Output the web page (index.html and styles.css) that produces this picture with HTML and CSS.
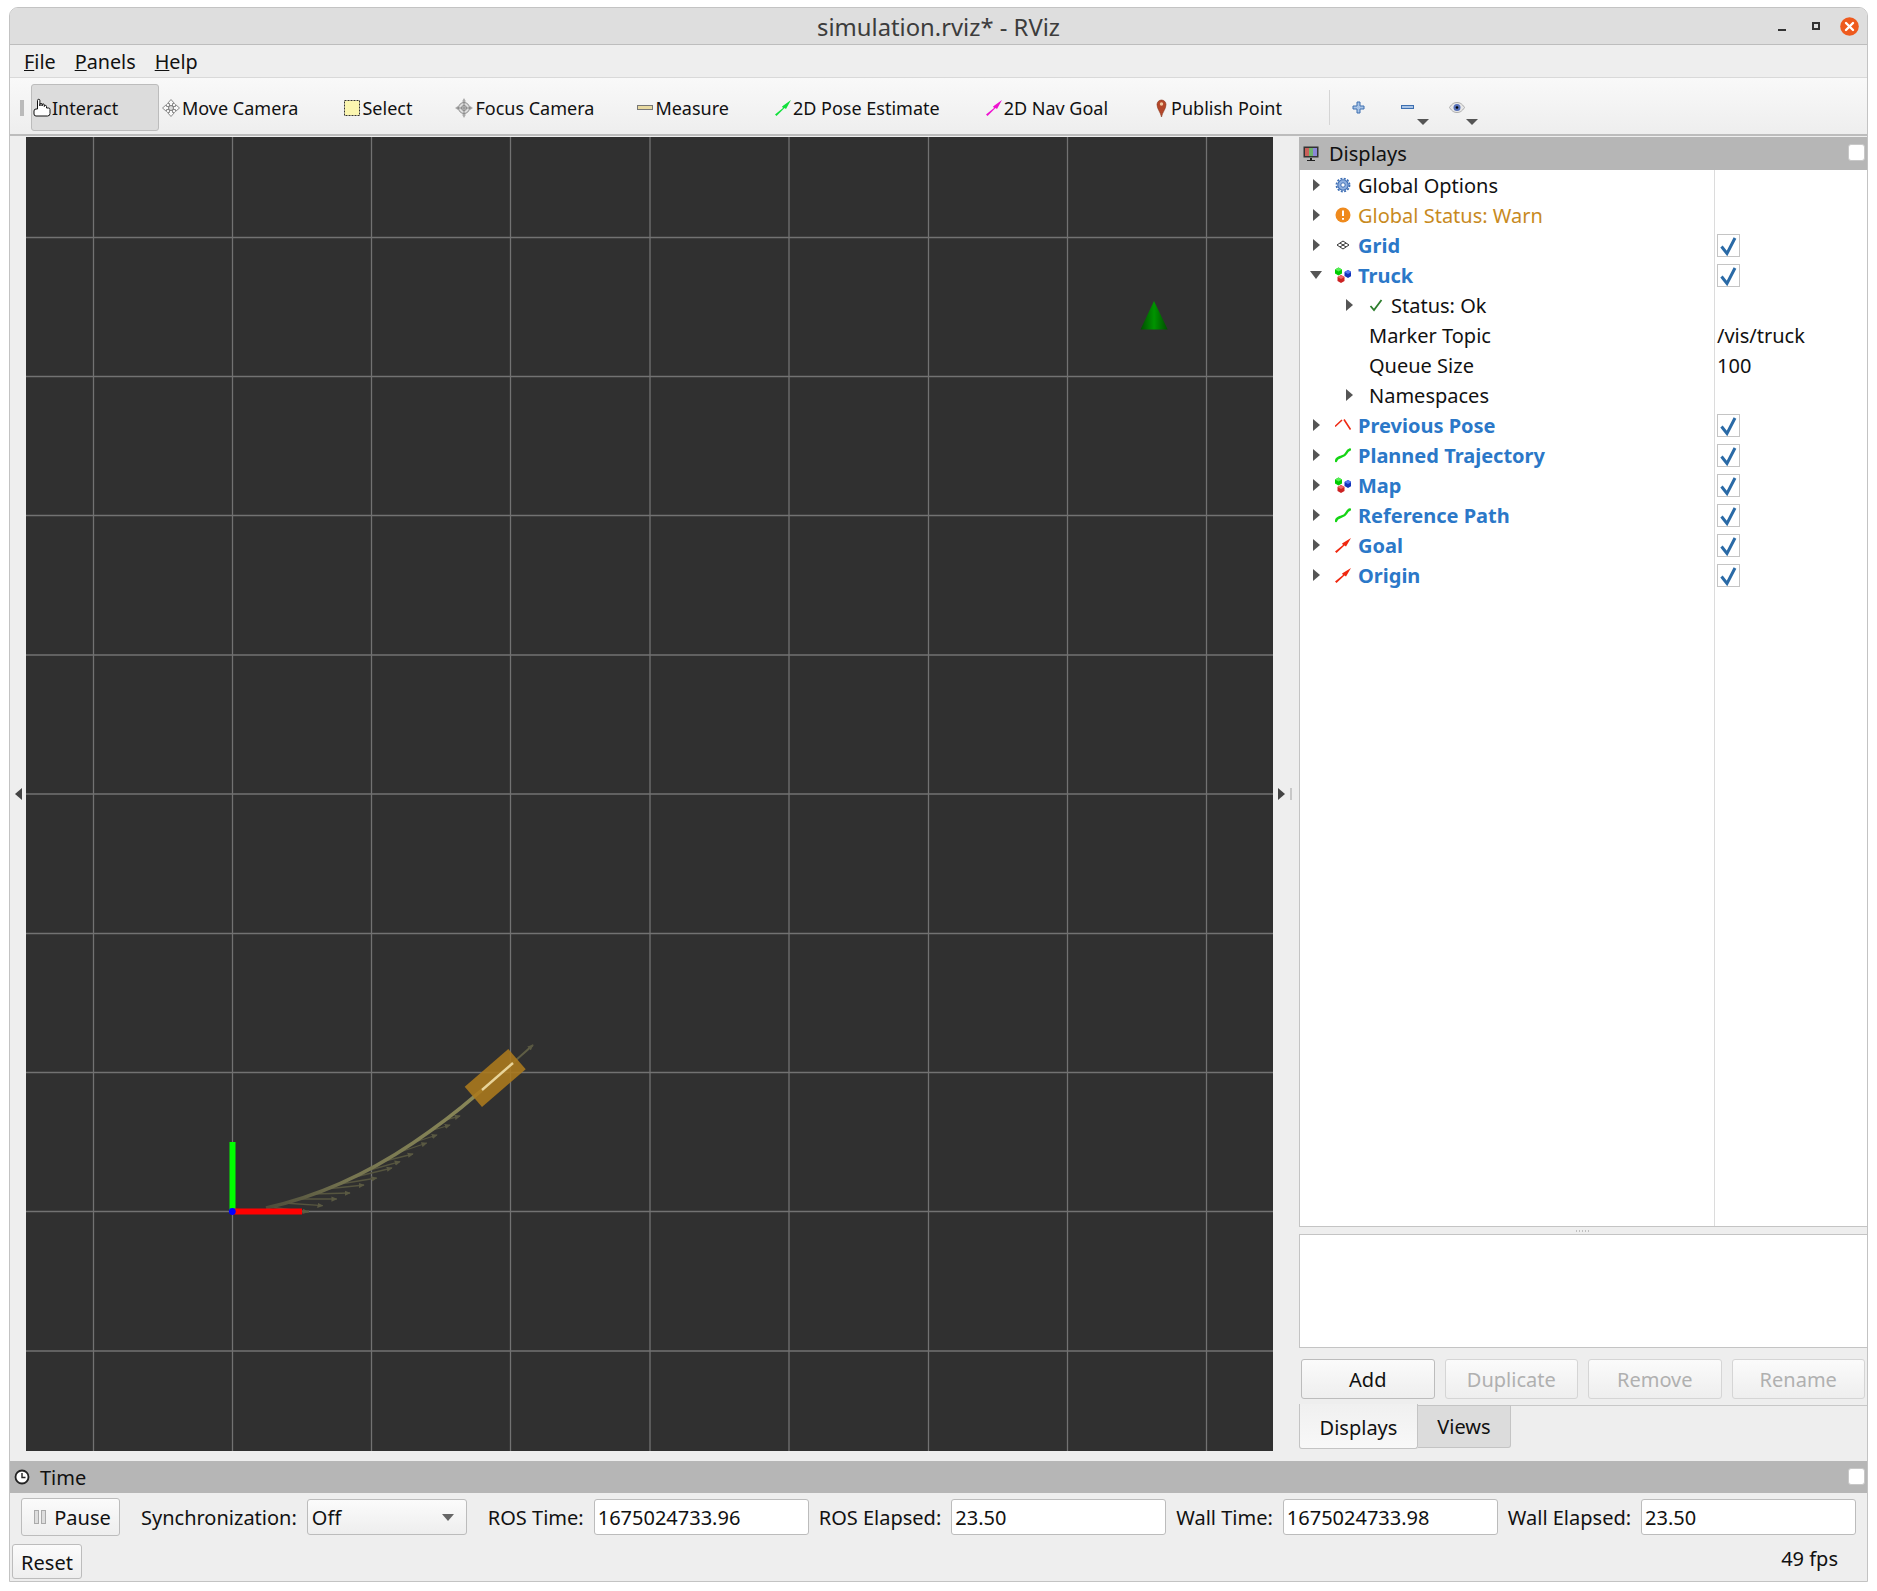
FILE: index.html
```html
<!DOCTYPE html>
<html lang="en">
<head>
<meta charset="utf-8">
<title>simulation.rviz* - RViz</title>
<link rel="stylesheet" href="styles.css">
</head>
<body>
<svg class="defs" width="0" height="0" aria-hidden="true">
  <defs>
    <symbol id="i-cubes" viewBox="0 0 16 16">
      <path d="M0 2.500 3.500.5 7 2.500V6.500L3.500 8.500 0 6.500z" fill="#0c0"/><path d="M0 2.500 3.500 4.500 7 2.500 3.500.5z" fill="#5e5"/>
      <path d="M2.500 10 6 8 9.500 10V14L6 16 2.500 14z" fill="#c22"/><path d="M2.500 10 6 12 9.500 10 6 8z" fill="#e66"/>
      <path d="M9.500 5 13 3 16.500 5V9L13 11 9.500 9z" fill="#13b"/><path d="M9.500 5 13 7 16.500 5 13 3z" fill="#57e"/>
    </symbol>
    <symbol id="i-path" viewBox="0 0 16 16">
      <path d="M1 14c.5-3 3-3.500 5-4.200s4-1.300 5-3.300 2-3.500 4-4" fill="none" stroke="#16d416" stroke-width="2.400" stroke-linecap="round"/>
    </symbol>
    <symbol id="i-arrow-red" viewBox="0 0 16 16">
      <path d="M0 14.500 8 8 7 6.500 16 1 11 9.500 9.500 8.500 1.500 16z" fill="#f0280f"/>
    </symbol>
    <symbol id="i-chev" viewBox="0 0 16 16">
      <path d="M0 9.500 7 3M9 2.500 15.500 12.500" fill="none" stroke="#ee2a14" stroke-width="1.600"/>
    </symbol>
    <symbol id="i-check" viewBox="0 0 23 23">
      <path d="M4.500 12.500 10 19.500 18 4" fill="none" stroke="#2a6aa6" stroke-width="3"/>
    </symbol>
  </defs>
</svg>
<div class="window">
  <header class="titlebar">
    <span></span>
    <span class="title">simulation.rviz* - RViz</span>
    <div class="wm">
      <span class="wm-min"></span>
      <span class="wm-max"></span>
      <svg class="wm-close" width="19" height="19" viewBox="0 0 19 19"><circle cx="9.500" cy="9.500" r="9.300" fill="#ee5a1e"/><path d="M6 6l7 7M13 6l-7 7" stroke="#fff" stroke-width="2.400" stroke-linecap="round"/></svg>
    </div>
  </header>
  <nav class="menubar">
    <span><u>F</u>ile</span>
    <span><u>P</u>anels</span>
    <span><u>H</u>elp</span>
  </nav>
  <div class="toolbar">
    <span class="grip"></span>
    <div class="tool tool-active">
      <svg width="18" height="19" viewBox="0 0 18 19"><path d="M4.500 11V2.500a1.200 1.200 0 0 1 2.400 0V8V6.500a1.100 1.100 0 0 1 2.200 0V8 7a1.100 1.100 0 0 1 2.200 0V8.500a1.100 1.100 0 0 1 2.200 0V10H15.500a1.500 1.500 0 0 1 1.500 1.500V15.500a2.500 2.500 0 0 1-2.500 2.500H3a2 2 0 0 1-2-2V13a2 2 0 0 1 2-2z" fill="#fff" stroke="#111" stroke-width="1"/></svg>
      <span>Interact</span>
    </div>
    <div class="tool tool-move">
      <svg width="18" height="18" viewBox="0 0 18 18"><path d="M9 .5 12.500 4.500H10.500V7.500H13.500V5.500L17.500 9 13.500 12.500V10.500H10.500V13.500H12.500L9 17.500 5.500 13.500H7.500V10.500H4.500V12.500L.5 9 4.500 5.500V7.500H7.500V4.500H5.500z" fill="#fafafa" stroke="#8a8a8a"/><circle cx="9" cy="9" r="2.500" fill="#ddd" stroke="#777"/></svg>
      <span>Move Camera</span>
    </div>
    <div class="tool tool-tight">
      <svg width="16" height="16" viewBox="0 0 16 16"><rect x="0.500" y="0.500" width="15" height="15" fill="#fbf6b0" stroke="#333" stroke-dasharray="2 1"/></svg>
      <span>Select</span>
    </div>
    <div class="tool tool-tight">
      <svg width="18" height="20" viewBox="0 0 18 20"><path d="M9 0 11 3.500H7zM9 20 7 16.500H11zM0 10 3 8V12zM18 10 15 12V8z" fill="#aaa"/><circle cx="9" cy="10" r="5.500" fill="#ddd" stroke="#8a8a8a"/><path d="M9 3v14M2 10h14" stroke="#888"/><circle cx="9" cy="10" r="2.500" fill="none" stroke="#888"/></svg>
      <span>Focus Camera</span>
    </div>
    <div class="tool">
      <svg width="16" height="16" viewBox="0 0 16 16"><rect x="0.500" y="5.500" width="15" height="4" fill="#e8d9a0" stroke="#777"/></svg>
      <span>Measure</span>
    </div>
    <div class="tool">
      <svg width="16" height="16" viewBox="0 0 16 16"><path d="M0 14.500 8 8 7 6.500 16 0 11 9 9.500 8 1.500 16z" fill="#12e03c"/></svg>
      <span>2D Pose Estimate</span>
    </div>
    <div class="tool tool-nav">
      <svg width="16" height="16" viewBox="0 0 16 16"><path d="M0 14.500 8 8 7 6.500 16 0 11 9 9.500 8 1.500 16z" fill="#ee12d0"/></svg>
      <span>2D Nav Goal</span>
    </div>
    <div class="tool tool-pub">
      <svg width="11" height="18" viewBox="0 0 11 18"><path d="M5.500 18C4.500 13 1 10 1 5.500a4.500 4.500 0 0 1 9 0C10 10 6.500 13 5.500 18z" fill="#b4472a" stroke="#8a3a20" stroke-width=".6"/><circle cx="5.500" cy="5" r="1.700" fill="#f0c8a0"/></svg>
      <span>Publish Point</span>
    </div>
    <span class="tool-sep"></span>
    <div class="tool-small tool-plus">
      <svg width="13" height="13" viewBox="0 0 13 13"><path d="M5 1h3v4h4v3H8v4H5V8H1V5h4z" fill="#a9c4e6" stroke="#3d6fb0"/></svg>
    </div>
    <div class="tool-small tool-minus">
      <svg width="13" height="5" viewBox="0 0 13 5"><rect x="0.500" y="0.500" width="12" height="3" fill="#a9c4e6" stroke="#3d6fb0"/></svg>
      <span class="drop"></span>
    </div>
    <div class="tool-small tool-eye">
      <svg width="16" height="11" viewBox="0 0 16 11"><path d="M.5 5.500C3 1.500 5.500.5 8 .5s5 1 7.500 5C13 9.500 10.500 10.500 8 10.500S3 9.500.5 5.500z" fill="#e8e8e8" stroke="#aaa"/><circle cx="8" cy="5.500" r="3.500" fill="#5570b8"/><circle cx="8" cy="5.500" r="1.300" fill="#000"/></svg>
      <span class="drop"></span>
    </div>
  </div>
  <main class="main">
    <div class="gutter gutter-left"><span class="tri-left"></span></div>
    <div class="viewport">
      <svg class="scene" viewBox="26 137 1247 1314" width="1247" height="1314">
        <defs>
          <linearGradient id="cone" x1="0" x2="1" y1="0" y2="0">
            <stop offset="0" stop-color="#004d00"/><stop offset=".5" stop-color="#009400"/><stop offset="1" stop-color="#004d00"/>
          </linearGradient>
          <linearGradient id="trail" gradientUnits="userSpaceOnUse" x1="266" y1="1208" x2="482" y2="1090">
            <stop offset="0" stop-color="#4c4b3a"/><stop offset=".35" stop-color="#767550"/><stop offset="1" stop-color="#8a8858"/>
          </linearGradient>
          <marker id="head" viewBox="0 0 8 8" refX="7" refY="4" markerWidth="6" markerHeight="6" markerUnits="userSpaceOnUse" orient="auto"><path d="M0 .5 8 4 0 7.500z" fill="#5a5942"/></marker>
        </defs>
        <g class="grid-lines">
          <path d="M93.500 137V1451M232.500 137V1451M371.500 137V1451M510.500 137V1451M650 137V1451M789 137V1451M928.500 137V1451M1067.500 137V1451M1206.500 137V1451"/>
          <path d="M26 237.500H1273M26 376.500H1273M26 515.500H1273M26 655H1273M26 794H1273M26 933.500H1273M26 1072.500H1273M26 1211.500H1273M26 1351H1273"/>
        </g>
        <path d="M1154 301 1167.700 329.500H1140.500z" fill="url(#cone)"/>
        <g class="ghosts">
          <path d="M270 1207 308 1212"/><path d="M284 1203 322.700 1205.700"/><path d="M298 1199 336.700 1199"/><path d="M312 1194 350 1193"/><path d="M326 1189 364 1185"/><path d="M340 1184 376.700 1178"/><path d="M355 1177 392 1168"/><path d="M370 1170 400 1161.700"/><path d="M385 1161 413 1154"/><path d="M400 1152 426.700 1143"/><path d="M415 1142 437 1135"/><path d="M430 1131 450 1125"/><path d="M445 1120 460 1116"/>
        </g>
        <path d="M266 1208C320 1196 370 1172 413 1143S470 1100 482 1090" fill="none" stroke="url(#trail)" stroke-width="3.500"/>
        <path d="M482 1090 533 1045" stroke="#5f5e45" stroke-width="2" marker-end="url(#head)"/>
        <path d="M508.300 1049 525.700 1069.300 482 1107 464.700 1086.700z" fill="#ac7a1d" fill-opacity=".88"/>
        <path d="M482 1090 513 1063" stroke="#e8d49a" stroke-width="2.400"/>
        <path d="M232.500 1211.500V1142" stroke="#0f0" stroke-width="6"/>
        <path d="M232 1211.500H302" stroke="#f00" stroke-width="6"/>
        <path d="M302 1211.500H309" stroke="#5f5e45" stroke-width="2"/>
        <circle cx="232.300" cy="1211.500" r="3.400" fill="#00f"/>
      </svg>
    </div>
    <div class="gutter gutter-right"><span class="tri-right"></span><span class="vdots"></span></div>
    <aside class="dock">
      <div class="panel-head dock-head">
        <svg width="16" height="16" viewBox="0 0 16 16"><rect x="0.500" y="0.500" width="15" height="11" fill="#333"/><rect x="2" y="2" width="4" height="8" fill="#c9605a"/><rect x="6" y="2" width="4" height="8" fill="#6fb36f"/><rect x="10" y="2" width="4" height="8" fill="#8a86d6"/><path d="M7 12h2v2h3v1H4v-1h3z" fill="#222"/></svg>
        <span class="head-label">Displays</span>
        <span class="head-box"></span>
      </div>
      <div class="tree">
        <div class="row"><div class="name"><span class="caret"></span><svg class="ico" width="16" height="16" viewBox="0 0 16 16"><circle cx="8" cy="8" r="5.200" fill="#8fb0e0" stroke="#3f6fb5" stroke-width="1.100"/><circle cx="8" cy="8" r="6.500" fill="none" stroke="#3f6fb5" stroke-width="1.800" stroke-dasharray="2 1.400"/><circle cx="8" cy="8" r="2.200" fill="#fff" stroke="#3f6fb5"/></svg><span>Global Options</span></div><div class="val"></div></div>
        <div class="row"><div class="name warn"><span class="caret"></span><svg class="ico" width="16" height="16" viewBox="0 0 16 16"><circle cx="8" cy="8" r="7.500" fill="#ef8a1d"/><path d="M8 3.500v5.500M8 11v1.800" stroke="#fff" stroke-width="2"/></svg><span>Global Status: Warn</span></div><div class="val"></div></div>
        <div class="row"><div class="name link"><span class="caret"></span><svg class="ico" width="16" height="16" viewBox="0 0 16 16"><path d="M8 4 14 8 8 12 2 8zM5 6l6 4M11 6l-6 4" fill="none" stroke="#333" stroke-width="1"/></svg><span>Grid</span></div><div class="val"><span class="check"><svg width="23" height="23"><use href="#i-check"/></svg></span></div></div>
        <div class="row"><div class="name link"><span class="caret caret-open"></span><svg class="ico" width="16" height="16"><use href="#i-cubes"/></svg><span>Truck</span></div><div class="val"><span class="check"><svg width="23" height="23"><use href="#i-check"/></svg></span></div></div>
        <div class="row"><div class="name child"><span class="caret"></span><svg class="ico-ok" width="14" height="14" viewBox="0 0 14 14"><path d="M1.500 8 5 12 12.500 2" fill="none" stroke="#2c7d2c" stroke-width="1.800"/></svg><span>Status: Ok</span></div><div class="val"></div></div>
        <div class="row"><div class="name prop"><span>Marker Topic</span></div><div class="val"><span class="val-text">/vis/truck</span></div></div>
        <div class="row"><div class="name prop"><span>Queue Size</span></div><div class="val"><span class="val-text">100</span></div></div>
        <div class="row"><div class="name child"><span class="caret"></span><span class="ns">Namespaces</span></div><div class="val"></div></div>
        <div class="row"><div class="name link"><span class="caret"></span><svg class="ico" width="16" height="16"><use href="#i-chev"/></svg><span>Previous Pose</span></div><div class="val"><span class="check"><svg width="23" height="23"><use href="#i-check"/></svg></span></div></div>
        <div class="row"><div class="name link"><span class="caret"></span><svg class="ico" width="16" height="16"><use href="#i-path"/></svg><span>Planned Trajectory</span></div><div class="val"><span class="check"><svg width="23" height="23"><use href="#i-check"/></svg></span></div></div>
        <div class="row"><div class="name link"><span class="caret"></span><svg class="ico" width="16" height="16"><use href="#i-cubes"/></svg><span>Map</span></div><div class="val"><span class="check"><svg width="23" height="23"><use href="#i-check"/></svg></span></div></div>
        <div class="row"><div class="name link"><span class="caret"></span><svg class="ico" width="16" height="16"><use href="#i-path"/></svg><span>Reference Path</span></div><div class="val"><span class="check"><svg width="23" height="23"><use href="#i-check"/></svg></span></div></div>
        <div class="row"><div class="name link"><span class="caret"></span><svg class="ico" width="16" height="16"><use href="#i-arrow-red"/></svg><span>Goal</span></div><div class="val"><span class="check"><svg width="23" height="23"><use href="#i-check"/></svg></span></div></div>
        <div class="row"><div class="name link"><span class="caret"></span><svg class="ico" width="16" height="16"><use href="#i-arrow-red"/></svg><span>Origin</span></div><div class="val"><span class="check"><svg width="23" height="23"><use href="#i-check"/></svg></span></div></div>
        <div class="row row-fill"><div class="name"></div><div class="val"></div></div>
      </div>
      <div class="hsplit"><span class="hdots"></span></div>
      <div class="desc"></div>
      <div class="actions">
        <div class="btn">Add</div>
        <div class="btn btn-off">Duplicate</div>
        <div class="btn btn-off">Remove</div>
        <div class="btn btn-off">Rename</div>
      </div>
      <div class="tabs">
        <div class="tab tab-on">Displays</div>
        <div class="tab">Views</div>
        <div class="tab-rest"></div>
      </div>
    </aside>
  </main>
  <section class="time">
    <div class="panel-head time-head">
      <svg width="16" height="16" viewBox="0 0 16 16"><circle cx="8" cy="8" r="6.500" fill="#fff" stroke="#222" stroke-width="1.800"/><path d="M8 4v4.500h3.500" fill="none" stroke="#222" stroke-width="1.400"/></svg>
      <span class="head-label">Time</span>
      <span class="head-box"></span>
    </div>
    <div class="time-row">
      <div class="btn btn-pause"><svg width="12" height="14" viewBox="0 0 12 14"><rect x="0.500" y="0.500" width="4" height="13" fill="#ddd" stroke="#aaa"/><rect x="7.500" y="0.500" width="4" height="13" fill="#ddd" stroke="#aaa"/></svg><span>Pause</span></div>
      <span>Synchronization:</span>
      <div class="combo"><span>Off</span><span class="combo-tri"></span></div>
      <span>ROS Time:</span>
      <div class="field">1675024733.96</div>
      <span>ROS Elapsed:</span>
      <div class="field">23.50</div>
      <span>Wall Time:</span>
      <div class="field">1675024733.98</div>
      <span>Wall Elapsed:</span>
      <div class="field">23.50</div>
    </div>
    <div class="time-row2">
      <div class="btn btn-reset">Reset</div>
      <span class="fps">49 fps</span>
    </div>
  </section>
</div>
</body>
</html>
```

FILE: styles.css
```css
* { box-sizing: border-box; }
html, body { margin: 0; padding: 0; background: #fff; }
body {
  font-family: "Noto Sans", sans-serif;
  font-size: 20px;
  color: #111;
  padding: 7px 9px 0 9px;
}
.defs { position: absolute; }
.window {
  width: 1859px;
  height: 1575px;
  display: flex;
  flex-direction: column;
  background: #eee;
  border: 1px solid #c3c3c3;
  border-radius: 9px 9px 0 0;
  overflow: hidden;
}
.titlebar {
  flex: none;
  height: 37px;
  display: grid;
  grid-template-columns: 1fr auto 1fr;
  align-items: center;
  background: #dedede;
  border-bottom: 1px solid #bdbdbd;
}
.title { font-size: 23.800px; color: #3c3c3c; padding-top: 1px; }
.wm { display: flex; justify-content: flex-end; align-items: center; padding-right: 8px; }
.wm-min { width: 8px; height: 2px; background: #333; margin-top: 8px; margin-right: 26px; }
.wm-max { width: 8px; height: 8px; border: 2px solid #333; margin-right: 20px; }
.menubar {
  flex: none;
  height: 33px;
  display: flex;
  align-items: center;
  gap: 19px;
  padding-left: 14px;
  font-size: 19.800px;
  border-bottom: 1px solid #d9d9d9;
}
.toolbar {
  flex: none;
  height: 58px;
  display: flex;
  align-items: center;
  padding: 3px 0 0 10px;
  background: linear-gradient(#f9f9f9, #eeeeee);
  border-bottom: 2px solid #bcbcbc;
}
.grip { width: 4px; height: 16px; margin-right: 7px; background-image: radial-gradient(#bbb 1px, transparent 1px); background-size: 2px 3px; }
.tool { height: 47px; display: flex; align-items: center; padding: 0 23px; gap: 2px; white-space: nowrap; font-size: 18px; }
.tool svg { flex: none; }
.tool-active { width: 128px; padding: 0 0 0 1px; gap: 1px; background: #dcdcdc; border: 1px solid #bcbcbc; border-radius: 3px; }
.tool-move { padding-left: 3px; }
.tool-tight { padding-right: 20px; }
.tool-nav { padding-right: 25px; }
.tool-pub { gap: 4px; }
.tool-sep { width: 1px; height: 35px; background: #d5d5d5; margin-left: 24px; }
.tool-small { position: relative; display: flex; align-items: center; justify-content: center; width: 20px; height: 47px; }
.tool-plus { margin-left: 19px; }
.tool-minus { margin-left: 29px; }
.tool-eye { margin-left: 29px; }
.tool-small svg { margin-top: -1px; }
.drop { position: absolute; left: 19px; top: 35px; border-top: 6px solid #555; border-left: 6px solid transparent; border-right: 6px solid transparent; }
.main { flex: 1; display: flex; padding: 1px 0 10px; min-height: 0; }
.gutter { flex: none; display: flex; align-items: center; justify-content: center; }
.gutter-left { width: 16px; padding-left: 2px; padding-right: 2px; }
.gutter-right { width: 26px; gap: 5px; padding-right: 2px; }
.tri-left { border-right: 7px solid #444; border-top: 6px solid transparent; border-bottom: 6px solid transparent; }
.tri-right { border-left: 7px solid #444; border-top: 6px solid transparent; border-bottom: 6px solid transparent; }
.vdots { width: 2px; height: 12px; background-image: radial-gradient(#c8c8c8 1px, transparent 1px); background-size: 2px 3px; }
.viewport { flex: none; width: 1247px; background: #303030; overflow: hidden; }
.scene { display: block; }
.grid-lines path { stroke: #727272; stroke-width: 1.300; fill: none; }
.ghosts path { stroke: #56553f; stroke-width: 1.300; fill: none; marker-end: url(#head); }
.dock { flex: 1; min-width: 0; display: flex; flex-direction: column; padding-bottom: 2px; }
.panel-head { flex: none; position: relative; display: flex; align-items: center; background: #b6b6b6; }
.dock-head { height: 33px; padding-left: 4px; }
.head-label { margin-left: 10px; }
.head-box { position: absolute; right: 2px; top: 7px; width: 17px; height: 17px; background: #fff; border: 1px solid #c8c8c8; border-radius: 3px; }
.tree { flex: 1; min-height: 0; display: flex; flex-direction: column; background: #fff; border: 1px solid #c4c4c4; border-top: 0; border-right: 0; }
.row { flex: none; display: grid; grid-template-columns: 414px 1fr; height: 30px; }
.row-fill { flex: 1; }
.name { display: flex; align-items: center; white-space: nowrap; }
.val { display: flex; align-items: center; border-left: 1px solid #dcdcdc; }
.caret { flex: none; width: 0; height: 0; margin-left: 13px; margin-right: 15px; border-left: 7px solid #555; border-top: 6px solid transparent; border-bottom: 6px solid transparent; }
.caret-open { margin-left: 10px; margin-right: 13px; border-left: 6px solid transparent; border-right: 6px solid transparent; border-top: 8px solid #555; border-bottom: 0; width: 12px; }
.ico { flex: none; margin-right: 7px; }
.child .caret { margin-left: 46px; margin-right: 15px; }
.ico-ok { flex: none; margin-left: 1px; margin-right: 8px; }
.ns { margin-left: 1px; }
.prop { padding-left: 69px; }
.warn { color: #c88a1e; }
.link { color: #2b78c8; font-weight: 700; }
.val-text { padding-left: 2px; }
.check { display: block; width: 23px; height: 23px; margin-left: 2px; background: #fff; border: 1px solid #c4c4c4; }
.check svg { display: block; margin: -1px; }
.hsplit { flex: none; height: 7px; display: flex; align-items: center; justify-content: center; }
.hdots { width: 16px; height: 2px; background-image: radial-gradient(#c0c0c0 1px, transparent 1px); background-size: 3px 2px; }
.desc { flex: none; height: 114px; background: #fff; border: 1px solid #c4c4c4; border-right: 0; }
.actions { flex: none; display: grid; grid-template-columns: repeat(4, 1fr); gap: 10px; height: 40px; margin-top: 11px; padding: 0 2px; }
.btn { display: flex; align-items: center; justify-content: center; background: linear-gradient(#fbfbfb, #eeeeee); border: 1px solid #bcbcbc; border-radius: 3px; }
.btn-off { color: #b0b0b0; border-color: #d5d5d5; }
.tabs { flex: none; display: flex; height: 45px; margin-top: 5px; }
.tab { width: 93px; height: 43px; margin-top: 1px; display: flex; align-items: center; justify-content: center; background: #dcdcdc; border: 1px solid #c4c4c4; border-left: 0; border-radius: 0 0 3px 0; }
.tab-on { width: 119px; height: 45px; margin-top: 0; padding-top: 3px; background: linear-gradient(#f0f0f0, #f8f8f8); border: 1px solid #c4c4c4; border-top: 0; border-radius: 0 0 3px 3px; }
.tab-rest { flex: 1; height: 1px; margin-top: 1px; background: #c8c8c8; }
.time { flex: none; padding-bottom: 2px; }
.time-head { height: 32px; padding-left: 4px; }
.time-row { display: flex; align-items: center; gap: 10px; height: 38px; margin-top: 5px; padding-left: 11px; white-space: nowrap; }
.btn-pause { width: 99px; height: 38px; gap: 8px; padding-left: 4px; margin-right: 11px; flex: none; }
.combo { flex: none; width: 160px; height: 36px; display: flex; align-items: center; justify-content: space-between; padding: 0 12px 0 4px; margin-right: 11px; background: linear-gradient(#fbfbfb, #eeeeee); border: 1px solid #bcbcbc; border-radius: 3px; }
.combo-tri { border-top: 7px solid #666; border-left: 6px solid transparent; border-right: 6px solid transparent; }
.field { flex: none; width: 215px; height: 36px; display: flex; align-items: center; padding-left: 3px; background: #fff; border: 1px solid #bcbcbc; border-radius: 3px; }
.time-row2 { display: flex; align-items: center; justify-content: space-between; height: 35px; margin-top: 8px; padding: 0 29px 0 2px; }
.btn-reset { width: 70px; height: 35px; padding-top: 2px; }
.fps { position: relative; top: -3px; }
```
